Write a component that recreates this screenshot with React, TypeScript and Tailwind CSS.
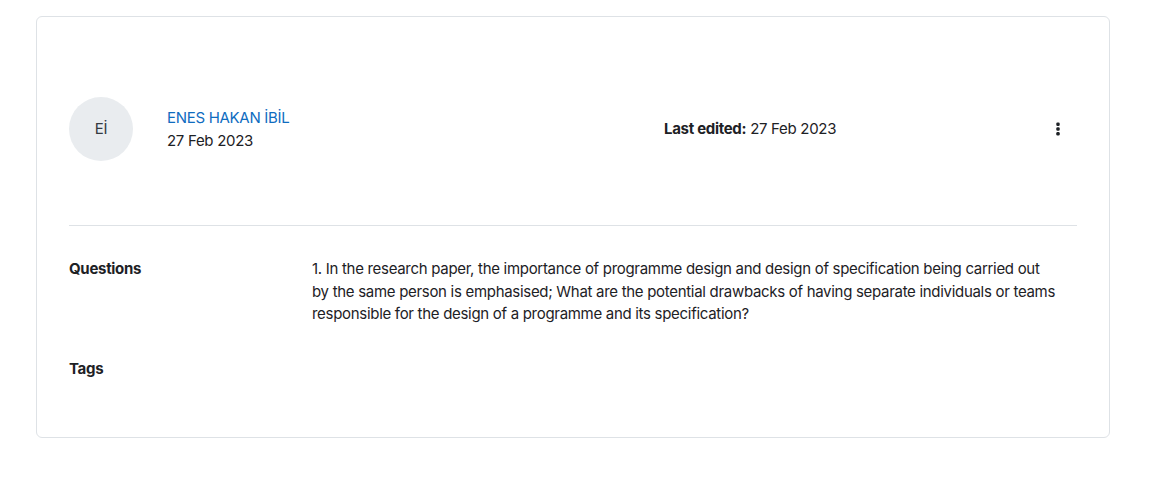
const App = () => {
  return (
    <div className="min-h-screen bg-white pt-4 px-9 font-['Inter',sans-serif] text-[15px] tracking-[-0.3px] text-[#1d2125]">
      <div className="w-[1074px] rounded-md border border-[#dee2e6] px-8 pt-8 pb-[57px]">
        <div className="mt-12 grid grid-cols-[595px_1fr_auto] items-center">
          <div className="flex items-center gap-[34px]">
            <div className="flex h-16 w-16 items-center justify-center rounded-full bg-[#e9ecef] text-[15px] text-[#343a40]">
              Eİ
            </div>
            <div className="flex flex-col leading-[23px]">
              <a href="#" className="text-[#0f6cbf]">
                ENES HAKAN İBİL
              </a>
              <span>27 Feb 2023</span>
            </div>
          </div>
          <div>
            <span className="font-bold">Last edited:</span> 27 Feb 2023
          </div>
          <button className="flex h-8 w-8 items-center justify-center mr-[3px]">
            <svg width="4" height="14" viewBox="0 0 4 14" fill="#1d2125">
              <rect x="0.3" y="0.5" width="3.4" height="3.4" rx="1.2" />
              <rect x="0.3" y="5.3" width="3.4" height="3.4" rx="1.2" />
              <rect x="0.3" y="10.1" width="3.4" height="3.4" rx="1.2" />
            </svg>
          </button>
        </div>
        <hr className="mt-16 border-[#dee2e6]" />
        <div className="mt-8 grid grid-cols-[243px_1fr] gap-y-8 leading-[22.5px]">
          <div className="font-bold">Questions</div>
          <p className="pr-5">
            1. In the research paper, the importance of programme design and design of specification being carried out by the same person is emphasised; What are the potential drawbacks of having separate individuals or teams responsible for the design of a programme and its specification?
          </p>
          <div className="font-bold">Tags</div>
          <div></div>
        </div>
      </div>
    </div>
  );
};

export default App;
